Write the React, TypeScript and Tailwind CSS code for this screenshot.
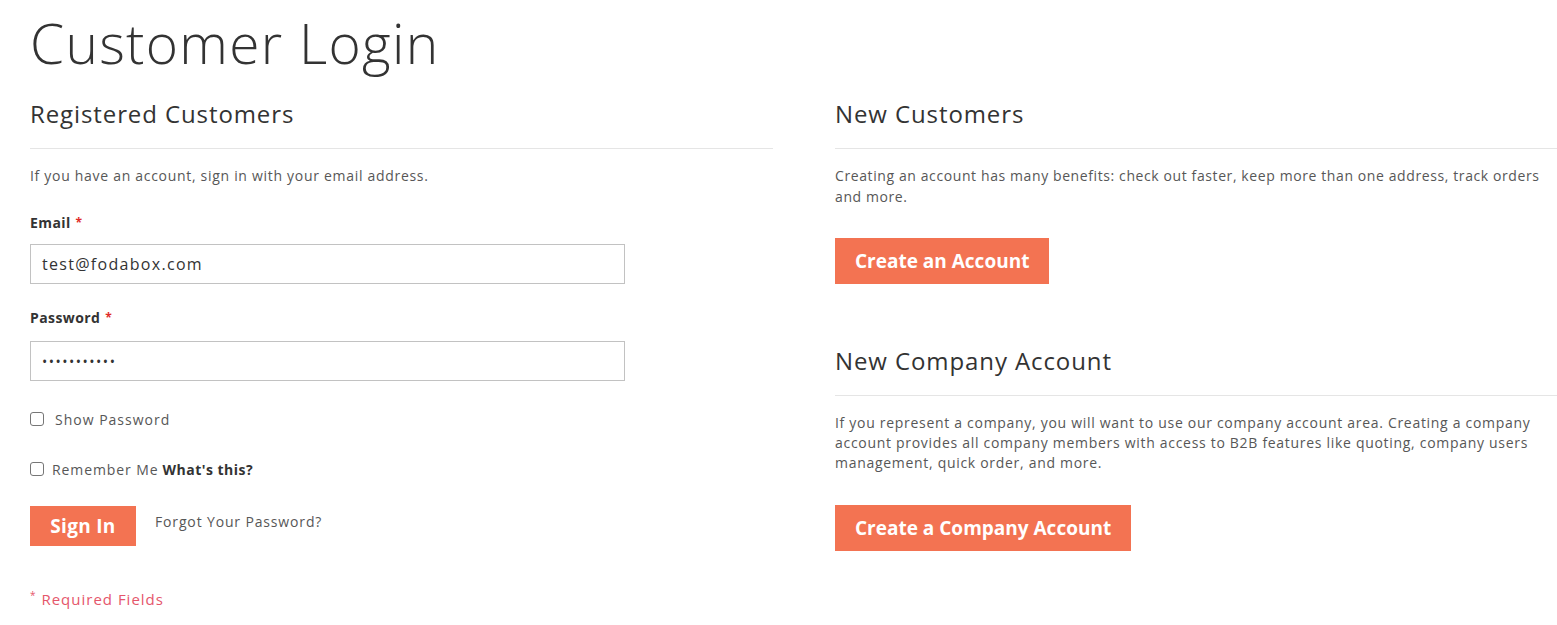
import React from "react";

function Req() {
  return <span className="ml-[5px] text-[12px] text-[#e02b27] align-top">*</span>;
}

export default function App() {
  return (
    <div className="min-h-[625px] bg-white text-[#333] font-['Open_Sans',sans-serif] pl-[30px]">
      <h1 className="text-[55px] leading-none font-light text-[#333] tracking-[1.3px] pt-[15px] h-[92px]">Customer Login</h1>
      <div className="flex gap-[62px]">
        {/* Left */}
        <div className="w-[743px] shrink-0">
          <h2 className="text-[24px] font-normal text-[#333] tracking-[0.9px] leading-[30px] pt-[7px] pb-[19px] border-b border-[#e5e5e5]">Registered Customers</h2>
          <p className="text-[14px] text-[#575757] tracking-[0.7px] mt-[17px] leading-[20px]">If you have an account, sign in with your email address.</p>
          <div className="mt-[27px]">
            <label className="block text-[14px] font-bold text-[#333] tracking-[0.4px] leading-[20px]">Email<Req /></label>
            <div className="mt-[11px] w-[595px] h-[40px] border border-[#c2c2c2] px-[11px] flex items-center text-[16px] text-[#333] tracking-[1.3px]">test@fodabox.com</div>
          </div>
          <div className="mt-[24px]">
            <label className="block text-[14px] font-bold text-[#333] tracking-[0.4px] leading-[20px]">Password<Req /></label>
            <div className="mt-[13px] w-[595px] h-[40px] border border-[#c2c2c2] px-[11px] flex items-center text-[14px] text-[#333] tracking-[1.5px]">•••••••••••</div>
          </div>
          <div className="mt-[29px] flex items-center h-[18px] text-[14px] text-[#575757] tracking-[1px]">
            <span className="w-[14px] h-[14px] border border-[#767676] rounded-[3px] mr-[11px]" />
            Show Password
          </div>
          <div className="mt-[32px] flex items-center h-[18px] text-[14px] text-[#575757] tracking-[0.9px]">
            <span className="w-[14px] h-[14px] border border-[#767676] rounded-[3px] mr-[8px]" />
            Remember Me <b className="ml-[4px] text-[#333] tracking-[0.5px]">What's this?</b>
          </div>
          <div className="mt-[28px] flex items-start">
            <button className="w-[106px] h-[40px] bg-[#f37352] text-white text-[19px] font-bold tracking-[0.3px]">Sign In</button>
            <span className="ml-[19px] mt-[5px] text-[14px] text-[#575757] tracking-[0.85px]">Forgot Your Password?</span>
          </div>
          <div className="mt-[42px] text-[15px] text-[#e5566b] tracking-[1px]"><span className="text-[10px] align-top">*</span> Required Fields</div>
        </div>
        {/* Right */}
        <div className="flex-1">
          <h2 className="text-[24px] font-normal text-[#333] tracking-[0.9px] leading-[30px] pt-[7px] pb-[19px] border-b border-[#e5e5e5]">New Customers</h2>
          <p className="text-[14px] text-[#575757] tracking-[0.6px] mt-[16px] leading-[21px]">Creating an account has many benefits: check out faster, keep more than one address, track orders and more.</p>
          <button className="mt-[31px] px-[20px] h-[46px] bg-[#f37352] text-white text-[19px] font-bold">Create an Account</button>
          <h2 className="mt-[62px] text-[24px] font-normal text-[#333] tracking-[0.9px] leading-[30px] pb-[19px] border-b border-[#e5e5e5]">New Company Account</h2>
          <p className="text-[14px] text-[#575757] tracking-[0.7px] mt-[17px] leading-[20px] pr-[8px]">If you represent a company, you will want to use our company account area. Creating a company account provides all company members with access to B2B features like quoting, company users management, quick order, and more.</p>
          <button className="mt-[32px] px-[20px] h-[46px] bg-[#f37352] text-white text-[19px] font-bold">Create a Company Account</button>
        </div>
      </div>
    </div>
  );
}
